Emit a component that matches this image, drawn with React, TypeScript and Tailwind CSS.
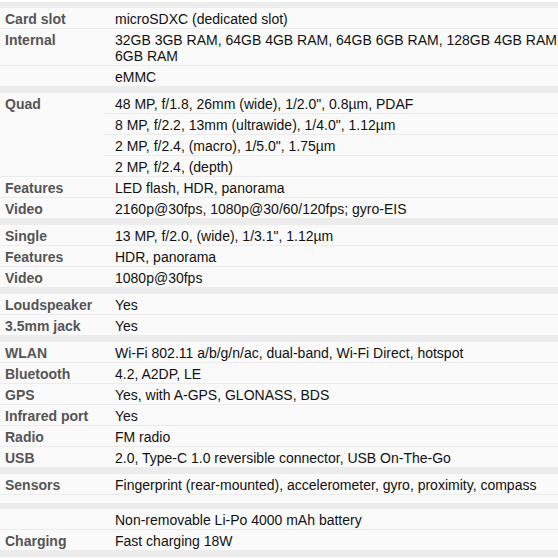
type Row = { label: string; values: string[] };

const sections: Row[][] = [
    [
        { label: 'Card slot', values: ['microSDXC (dedicated slot)'] },
        { label: 'Internal', values: ['32GB 3GB RAM, 64GB 4GB RAM, 64GB 6GB RAM, 128GB 4GB RAM 6GB RAM'] },
        { label: '', values: ['eMMC'] },
    ],
    [
        {
            label: 'Quad',
            values: [
                '48 MP, f/1.8, 26mm (wide), 1/2.0", 0.8µm, PDAF',
                '8 MP, f/2.2, 13mm (ultrawide), 1/4.0", 1.12µm',
                '2 MP, f/2.4, (macro), 1/5.0", 1.75µm',
                '2 MP, f/2.4, (depth)',
            ],
        },
        { label: 'Features', values: ['LED flash, HDR, panorama'] },
        { label: 'Video', values: ['2160p@30fps, 1080p@30/60/120fps; gyro-EIS'] },
    ],
    [
        { label: 'Single', values: ['13 MP, f/2.0, (wide), 1/3.1", 1.12µm'] },
        { label: 'Features', values: ['HDR, panorama'] },
        { label: 'Video', values: ['1080p@30fps'] },
    ],
    [
        { label: 'Loudspeaker', values: ['Yes'] },
        { label: '3.5mm jack', values: ['Yes'] },
    ],
    [
        { label: 'WLAN', values: ['Wi-Fi 802.11 a/b/g/n/ac, dual-band, Wi-Fi Direct, hotspot'] },
        { label: 'Bluetooth', values: ['4.2, A2DP, LE'] },
        { label: 'GPS', values: ['Yes, with A-GPS, GLONASS, BDS'] },
        { label: 'Infrared port', values: ['Yes'] },
        { label: 'Radio', values: ['FM radio'] },
        { label: 'USB', values: ['2.0, Type-C 1.0 reversible connector, USB On-The-Go'] },
    ],
    [{ label: 'Sensors', values: ['Fingerprint (rear-mounted), accelerometer, gyro, proximity, compass'] }],
    [
        { label: '', values: ['Non-removable Li-Po 4000 mAh battery'] },
        { label: 'Charging', values: ['Fast charging 18W'] },
    ],
];

const SpecRow = ({ row }: { row: Row }) => (
    <div className="flex border-b border-[#ececec]">
        <div className="w-[103px] shrink-0 pl-[5px] pt-[3px] font-bold text-[#555]">{row.label}</div>
        <div className="flex-1 min-w-0">
            {row.values.map((v, i) => (
                <div
                    key={i}
                    className={`pl-[12px] pt-[3px] pb-[1px] ${i < row.values.length - 1 ? 'border-b border-[#ececec]' : ''}`}
                >
                    {v}
                </div>
            ))}
        </div>
    </div>
);

export default function App() {
    return (
        <div
            className="w-[558px] h-[558px] overflow-hidden bg-white pt-[2px] text-[14px] leading-[16px] text-[#111]"
            style={{ fontFamily: '"Liberation Sans", Arial, sans-serif' }}
        >
            {sections.map((rows, si) => (
                <div key={si} className="border-t-[6px] border-[#ececec] bg-[#fafafa]">
                    {rows.map((row, ri) => (
                        <SpecRow key={ri} row={row} />
                    ))}
                    {si === 5 && <div className="h-[8px]" />}
                </div>
            ))}
            <div className="h-[6px] bg-[#ececec]" />
        </div>
    );
}
